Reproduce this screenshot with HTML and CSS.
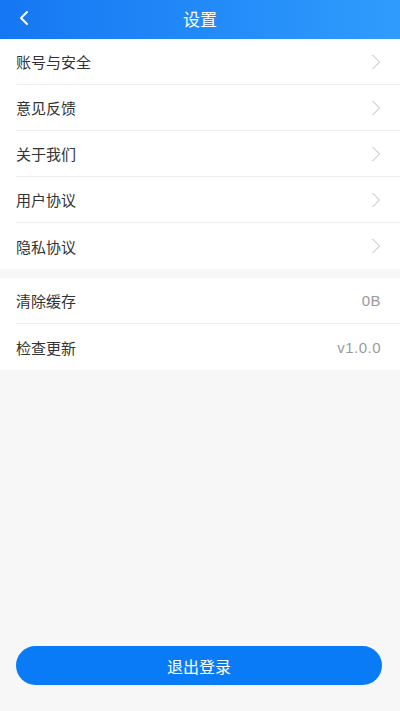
FILE: index.html
```html
<!DOCTYPE html>
<html lang="zh-CN">
<head>
  <meta charset="UTF-8">
  <meta name="viewport" content="width=device-width, initial-scale=1.0">
  <title>设置</title>
  <link rel="stylesheet" href="styles.css">
</head>
<body>
  <div class="page">
    <header class="nav-bar">
      <span class="nav-back">
        <svg width="12" height="16" viewBox="0 0 12 16"><path d="M9 2 L3 8 L9 14" fill="none" stroke="#ffffff" stroke-width="2" stroke-linecap="round" stroke-linejoin="round"/></svg>
      </span>
      <h1 class="nav-title">设置</h1>
    </header>

    <div class="cell-group">
      <div class="cell"><span class="cell-label">账号与安全</span><svg class="cell-arrow" width="10" height="16" viewBox="0 0 10 16"><path d="M1.5 1 L8.5 8 L1.5 15" fill="none" stroke="#b8b8b8" stroke-width="1"/></svg></div>
      <div class="cell"><span class="cell-label">意见反馈</span><svg class="cell-arrow" width="10" height="16" viewBox="0 0 10 16"><path d="M1.5 1 L8.5 8 L1.5 15" fill="none" stroke="#b8b8b8" stroke-width="1"/></svg></div>
      <div class="cell"><span class="cell-label">关于我们</span><svg class="cell-arrow" width="10" height="16" viewBox="0 0 10 16"><path d="M1.5 1 L8.5 8 L1.5 15" fill="none" stroke="#b8b8b8" stroke-width="1"/></svg></div>
      <div class="cell"><span class="cell-label">用户协议</span><svg class="cell-arrow" width="10" height="16" viewBox="0 0 10 16"><path d="M1.5 1 L8.5 8 L1.5 15" fill="none" stroke="#b8b8b8" stroke-width="1"/></svg></div>
      <div class="cell"><span class="cell-label">隐私协议</span><svg class="cell-arrow" width="10" height="16" viewBox="0 0 10 16"><path d="M1.5 1 L8.5 8 L1.5 15" fill="none" stroke="#b8b8b8" stroke-width="1"/></svg></div>
    </div>

    <div class="cell-group">
      <div class="cell"><span class="cell-label">清除缓存</span><span class="cell-value">0B</span></div>
      <div class="cell"><span class="cell-label">检查更新</span><span class="cell-value">v1.0.0</span></div>
    </div>

    <div class="footer">
      <button class="logout-button">退出登录</button>
    </div>
  </div>
</body>
</html>
```

FILE: styles.css
```css
* {
  box-sizing: border-box;
}

body {
  margin: 0;
  padding: 0;
  font-family: "Noto Sans CJK SC", "Noto Sans", sans-serif;
  background: #f7f7f7;
  color: #333333;
}

.page {
  display: flex;
  flex-direction: column;
  height: 711px;
}

.nav-bar {
  position: relative;
  height: 39px;
  padding-bottom: 2px;
  display: flex;
  align-items: center;
  justify-content: center;
  background: linear-gradient(90deg, #1577f3, #2f9cfd);
}

.nav-back {
  position: absolute;
  left: 18px;
  top: 10px;
  display: flex;
}

.nav-title {
  margin: 0;
  font-size: 17px;
  font-weight: 400;
  color: #ffffff;
}

.cell-group {
  background: #ffffff;
  margin-bottom: 9px;
}

.cell {
  height: 46px;
  margin-left: 16px;
  padding-right: 19px;
  display: flex;
  align-items: center;
  justify-content: space-between;
  border-bottom: 1px solid #eeeeee;
}

.cell:last-child {
  border-bottom: none;
}

.cell-label {
  font-size: 15px;
  color: #333333;
}

.cell-value {
  font-size: 15px;
  color: #9a9a9a;
  font-family: "Liberation Sans", "Noto Sans", sans-serif;
  letter-spacing: 0.5px;
}

.cell-arrow {
  display: block;
}

.footer {
  margin-top: auto;
  padding: 0 18px 26px 16px;
}

.logout-button {
  width: 100%;
  height: 39px;
  border: none;
  border-radius: 20px;
  background: #0a7bf6;
  color: #ffffff;
  font-family: "Noto Sans CJK SC", sans-serif;
  font-size: 16px;
}
```
